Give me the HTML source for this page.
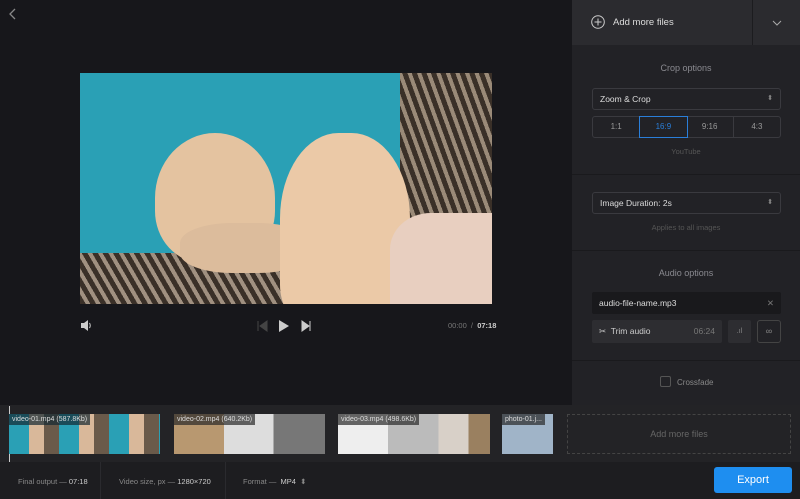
<!DOCTYPE html>
<html><head><style>
*{margin:0;padding:0;box-sizing:border-box}
body{width:800px;height:499px;background:#17171b;font-family:"Liberation Sans",sans-serif;position:relative;overflow:hidden;color:#ccc}
.a{position:absolute}
.panel{left:572px;top:0;width:228px;height:405px;background:#222226}
.sec{border-bottom:1px solid #1a1a1d;position:absolute;left:0;width:228px}
.sel{position:absolute;left:20px;width:189px;height:22px;border:1px solid #3a3a3f;border-radius:3px;font-size:8.5px;color:#ddd;padding:5px 7px}
.t{text-align:center;font-size:9px;color:#8a8a90;position:absolute;left:0;width:228px}
.h{text-align:center;font-size:9px;color:#555;position:absolute;left:0;width:228px}
.clip{position:absolute;top:414px;height:40px;overflow:hidden}
.lbl{position:absolute;left:0;top:0;background:rgba(20,40,50,.7);color:#ddd;font-size:7px;padding:2px 3px}
.bb{font-size:7.5px;color:#888;position:absolute;top:477px}
</style></head><body>
<svg class="a" style="left:8px;top:8px" width="10" height="12"><path d="M7 1L2 6L7 11" stroke="#888" stroke-width="1.3" fill="none"/></svg>
<div class="a" style="left:80px;top:73px;width:412px;height:231px;background:#2aa0b5;overflow:hidden">
 <div class="a" style="left:320px;top:0;width:92px;height:231px;background:repeating-linear-gradient(70deg,#3a3028 0 5px,#9a8a78 5px 9px)"></div>
 <div class="a" style="left:0;top:180px;width:240px;height:51px;background:repeating-linear-gradient(60deg,#3a3028 0 5px,#a09080 5px 9px)"></div>
 <div class="a" style="left:75px;top:60px;width:120px;height:130px;border-radius:50% 50% 40% 40%;background:#e4c3a0"></div>
 <div class="a" style="left:100px;top:150px;width:130px;height:50px;border-radius:40%;background:#dcbc9c"></div>
 <div class="a" style="left:200px;top:60px;width:130px;height:190px;border-radius:45% 45% 20% 20%;background:#ebc9a7"></div>
 <div class="a" style="left:310px;top:140px;width:102px;height:91px;border-radius:40% 0 0 0;background:#e8cfc0"></div>
</div>
<svg class="a" style="left:80px;top:320px" width="12" height="11"><path d="M1 3H4L8 0V11L4 8H1Z" fill="#ccc"/><path d="M9.5 3Q11 5.5 9.5 8" stroke="#ccc" fill="none"/></svg>
<svg class="a" style="left:257px;top:320px" width="60" height="12"><path d="M1 1V11M10 1L3 6L10 11Z" fill="#444" stroke="#444"/><path d="M22 0L32 6L22 12Z" fill="#ccc"/><path d="M45 1L52 6L45 11ZM53 1V11" fill="#ccc" stroke="#ccc"/></svg>
<div class="a" style="left:448px;top:321px;font-size:7.5px;color:#777">00:00 &nbsp;/&nbsp; <b style="color:#ccc">07:18</b></div>
<div class="a panel">
 <div class="a" style="left:0;top:0;width:228px;height:45px;background:#2b2b2f"></div>
 <div class="a" style="left:180px;top:0;width:1px;height:45px;background:#1c1c1f"></div>
 <svg class="a" style="left:19px;top:15px" width="14" height="14"><circle cx="7" cy="7" r="6.3" stroke="#ccc" fill="none"/><path d="M7 3.5V10.5M3.5 7H10.5" stroke="#ccc"/></svg>
 <div class="a" style="left:41px;top:17px;font-size:9.5px;color:#ddd">Add more files</div>
 <svg class="a" style="left:200px;top:20px" width="10" height="6"><path d="M1 1L5 5L9 1" stroke="#aaa" fill="none"/></svg>
 <div class="sec" style="top:45px;height:130px"></div>
 <div class="t" style="top:63px">Crop options</div>
 <div class="sel" style="top:88px">Zoom &amp; Crop<span style="float:right;color:#888;font-size:7px">⬍</span></div>
 <div class="a" style="left:20px;top:116px;width:189px;height:22px;border:1px solid #3a3a3f;border-radius:3px;display:flex;font-size:8px;color:#999">
  <div style="flex:1;text-align:center;line-height:20px;border-right:1px solid #3a3a3f">1:1</div>
  <div style="flex:1;text-align:center;line-height:20px;outline:1px solid #2a7ed8;color:#2a7ed8">16:9</div>
  <div style="flex:1;text-align:center;line-height:20px;border-right:1px solid #3a3a3f">9:16</div>
  <div style="flex:1;text-align:center;line-height:20px">4:3</div></div>
 <div class="h" style="top:147px;font-size:7.5px">YouTube</div>
 <div class="sec" style="top:175px;height:76px"></div>
 <div class="sel" style="top:192px">Image Duration: 2s<span style="float:right;color:#888;font-size:7px">⬍</span></div>
 <div class="h" style="top:223px;font-size:7.5px">Applies to all images</div>
 <div class="sec" style="top:251px;height:110px"></div>
 <div class="t" style="top:268px">Audio options</div>
 <div class="a" style="left:20px;top:292px;width:189px;height:22px;background:#19191c;border-radius:2px;font-size:8.5px;color:#ddd;padding:6px 7px">audio-file-name.mp3<span style="position:absolute;right:7px;color:#777">✕</span></div>
 <div class="a" style="left:20px;top:320px;width:130px;height:23px;background:#2d2d31;border-radius:2px;font-size:8.5px;color:#ccc;padding:6px 7px">✂&nbsp; Trim audio<span style="position:absolute;right:7px;color:#777">06:24</span></div>
 <div class="a" style="left:156px;top:320px;width:23px;height:23px;background:#2d2d31;border-radius:2px;font-size:7px;color:#888;text-align:center;line-height:23px">.ıl</div>
 <div class="a" style="left:185px;top:320px;width:24px;height:23px;border:1px solid #444;border-radius:3px;font-size:9px;color:#888;text-align:center;line-height:21px">∞</div>
 <div class="a" style="left:88px;top:376px;width:11px;height:11px;border:1px solid #555;border-radius:2px"></div>
 <div class="a" style="left:105px;top:378px;font-size:8px;color:#888">Crossfade</div>
</div>
<div class="a" style="left:0;top:405px;width:800px;height:57px;background:#232326"></div>
<div class="a" style="left:9px;top:406px;width:1px;height:56px;background:#ccc"></div>
<div class="clip" style="left:9px;width:151px;background:repeating-linear-gradient(90deg,#2aa0b5 0 20px,#d9b89a 20px 35px,#6a5a4a 35px 50px)"><div class="lbl">video-01.mp4 (587.8Kb)</div></div>
<div class="clip" style="left:174px;width:151px;background:linear-gradient(90deg,#b89870 0 33%,#ddd 33% 66%,#777 66%)"><div class="lbl" style="background:rgba(40,40,40,.7)">video-02.mp4 (640.2Kb)</div></div>
<div class="clip" style="left:338px;width:152px;background:linear-gradient(90deg,#eee 0 33%,#bbb 33% 66%,#d8d0c8 66% 86%,#9a8060 86%)"><div class="lbl" style="background:rgba(40,40,40,.7)">video-03.mp4 (498.6Kb)</div></div>
<div class="clip" style="left:502px;width:51px;background:#a0b4c8"><div class="lbl" style="background:rgba(40,40,40,.7)">photo-01.j...</div></div>
<div class="a" style="left:567px;top:414px;width:224px;height:40px;border:1px dashed #444;font-size:9px;color:#666;text-align:center;line-height:38px">Add more files</div>
<div class="a" style="left:0;top:462px;width:800px;height:37px;background:#1d1d20"></div>
<div class="a" style="left:100px;top:462px;width:1px;height:37px;background:#2a2a2e"></div>
<div class="a" style="left:225px;top:462px;width:1px;height:37px;background:#2a2a2e"></div>
<div class="bb" style="left:18px">Final output — <span style="color:#ccc">07:18</span></div>
<div class="bb" style="left:119px">Video size, px — <span style="color:#ccc">1280×720</span></div>
<div class="bb" style="left:243px">Format — &nbsp;<span style="color:#ccc">MP4</span> &nbsp;⬍</div>
<div class="a" style="left:714px;top:467px;width:78px;height:26px;background:#1e8ef0;border-radius:3px;color:#fff;font-size:11px;text-align:center;line-height:26px">Export</div>
</body></html>
